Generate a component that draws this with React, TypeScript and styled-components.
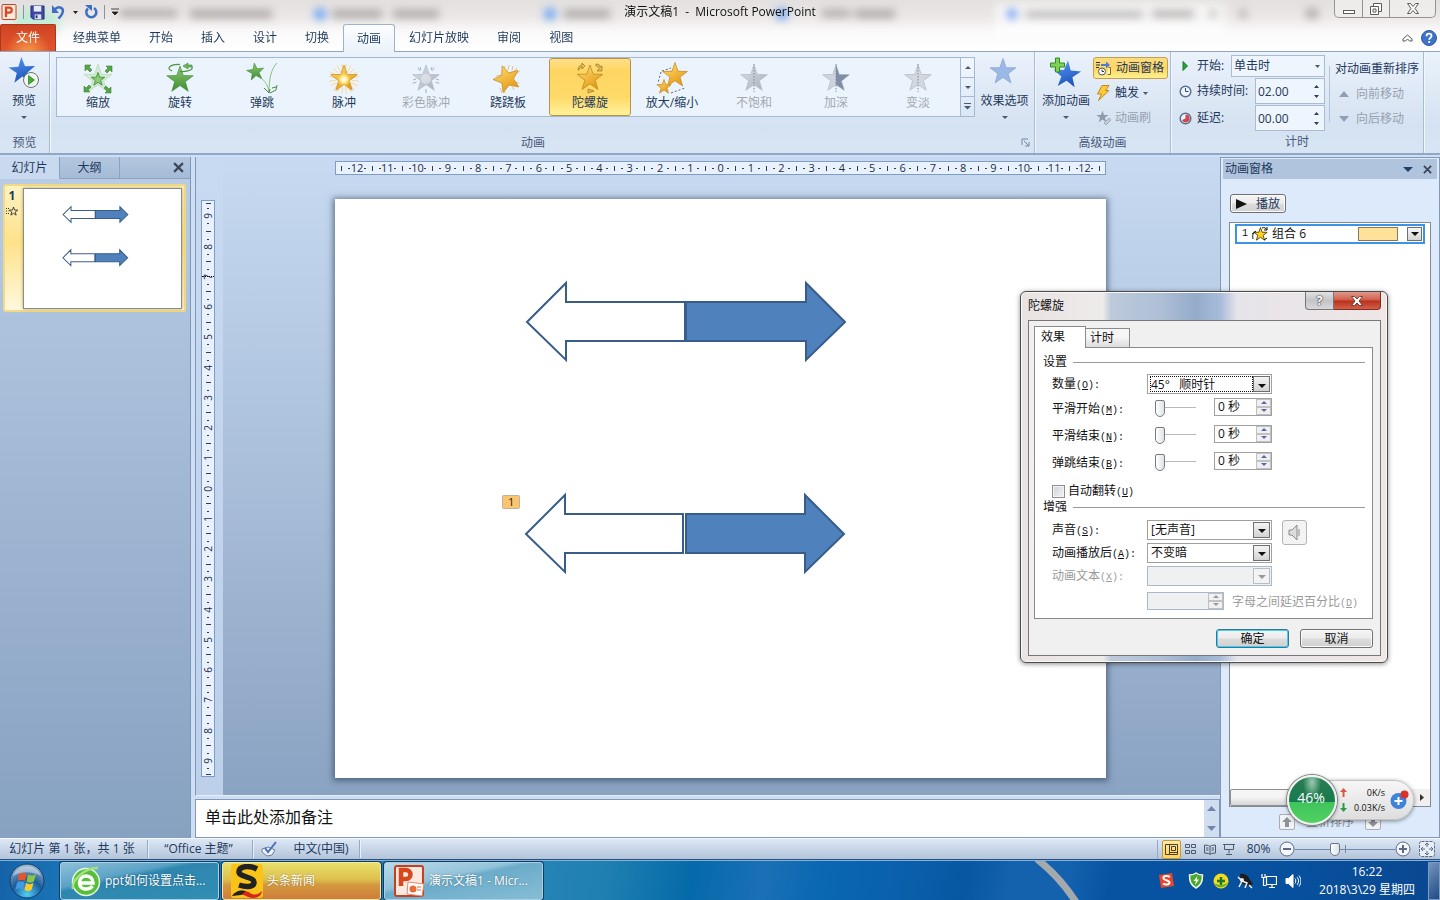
import React from 'react';
import styled, { createGlobalStyle, css } from 'styled-components';

const Global = createGlobalStyle`
  *, *::before, *::after { box-sizing: border-box; }
  body { margin: 0; font: 12px/16px "Open Sans", "Noto Sans CJK SC", sans-serif; color: #1e395b; }
  button, input, select, textarea { font: inherit; color: inherit; margin: 0; padding: 0; border: 0; background: none; outline: none; }
  button { white-space: nowrap; cursor: default; }
  svg { display: block; flex: none; }
`;

const starPoints = (cx: number, cy: number, r: number, rot = 0, inner = 0.4) =>
  Array.from({ length: 10 }, (_, i) => {
    const a = ((i * 36 - 90 + rot) * Math.PI) / 180;
    const d = i % 2 ? r * inner : r;
    return `${(cx + d * Math.cos(a)).toFixed(2)},${(cy + d * Math.sin(a)).toFixed(2)}`;
  }).join(' ');

/* ---------- page frame ---------- */

const Desktop = styled.div`
  position: relative;
  min-height: 100vh;
  display: flex;
  flex-direction: column;
  overflow: hidden;
`;

const TopChrome = styled.header`
  position: relative;
  background: linear-gradient(#e3e0df 0, #eae7e6 16px, #fbfafa 32px, #fff 51px);
  border-bottom: 1px solid #8fa5c0;
`;

const GlassBackdrop = styled.svg`
  position: absolute;
  left: 0;
  top: 0;
  width: 100%;
  height: 48px;
`;

const TitleBar = styled.div`
  position: relative;
  height: 24px;
  display: grid;
  grid-template-columns: 1fr auto 1fr;
  align-items: center;
`;

const QuickAccess = styled.div`
  display: flex;
  align-items: center;
  height: 22px;
  padding-left: 1px;
  gap: 6px;
`;

const IconButton = styled.button`
  display: flex;
  align-items: center;
  justify-content: center;
`;

const Separator = styled.span`
  width: 1px;
  height: 14px;
  background: #8d929c;
`;

const AppTitle = styled.h1`
  margin: 0;
  font: inherit;
  line-height: 24px;
  color: #111;
  white-space: pre;
`;

const WindowButtons = styled.div`
  justify-self: end;
  align-self: start;
  margin-right: 4px;
  height: 18px;
  display: flex;
  border: 1px solid #98928f;
  border-top: 0;
  border-radius: 0 0 5px 5px;
  background: rgba(240, 238, 237, 0.8);
`;

const WindowButton = styled.button<{ $wide?: boolean }>`
  width: ${(p) => (p.$wide ? 46 : 27)}px;
  display: flex;
  justify-content: center;
  align-items: center;
  & + & { border-left: 1px solid #98928f; }
`;

const TabBar = styled.nav`
  position: relative;
  height: 27px;
  display: flex;
`;

const FileTab = styled.button`
  width: 56px;
  height: 27px;
  color: #fff;
  border: 1px solid #a83a1c;
  border-bottom: 0;
  border-radius: 2px 2px 0 0;
  background: radial-gradient(ellipse at 50% 110%, #f79a4a 0, rgba(240, 110, 50, 0) 60%), linear-gradient(#cf4423, #e2542b);
  margin-right: 3px;
`;

const RibbonTab = styled.button<{ $active?: boolean }>`
  padding: 0 14px;
  height: 27px;
  ${(p) =>
    p.$active &&
    css`
      height: 28px;
      padding: 0 13px;
      border: 1px solid #9fb2cb;
      border-bottom: 0;
      border-radius: 3px 3px 0 0;
      background: linear-gradient(#fdfeff, #eaf2fb);
    `}
`;

const TabBarEnd = styled.div`
  margin-left: auto;
  display: flex;
  align-items: center;
  gap: 8px;
  padding-right: 3px;
`;

/* ---------- ribbon ---------- */

const Ribbon = styled.section`
  display: flex;
  height: 103px;
  padding-right: 16px;
  background: linear-gradient(#eaf2fb 0, #dfe9f6 40px, #d5e2f1 75px, #d8e5f4);
  border-bottom: 2px solid #8fa8c8;
`;

const Group = styled.div<{ $grow?: boolean; $width?: number }>`
  display: flex;
  flex-direction: column;
  ${(p) => (p.$grow ? 'flex: 1; min-width: 0;' : `flex: none; width: ${p.$width}px;`)}
  border-right: 1px solid #a9bcd5;
  box-shadow: 1px 0 0 #f2f7fc;
`;

const GroupBody = styled.div<{ $left?: number }>`
  flex: 1;
  display: flex;
  padding: 5px 0 0 ${(p) => p.$left ?? 5}px;
  min-width: 0;
`;

const GroupLabel = styled.div<{ $launcher?: boolean }>`
  position: relative;
  height: 21px;
  padding-right: ${(p) => (p.$launcher ? 18 : 0)}px;
  line-height: 20px;
  text-align: center;
  color: #48597a;
`;

const Launcher = styled.button`
  position: absolute;
  right: 4px;
  top: 5px;
`;

const BigButton = styled.button<{ $width: number }>`
  width: ${(p) => p.$width}px;
  flex: none;
  height: 76px;
  display: flex;
  flex-direction: column;
  align-items: center;
  & > span { line-height: 16px; margin: 4px 0 7px; }
`;

const Gallery = styled.div`
  flex: 1;
  min-width: 0;
  height: 60px;
  display: flex;
  border: 1px solid #a4b8d2;
  background: #ebf4fc;
`;

const GalleryItems = styled.div`
  flex: 1;
  min-width: 0;
  display: flex;
  overflow: hidden;
`;

const GalleryItem = styled.button<{ $selected?: boolean }>`
  flex: none;
  width: 82px;
  height: 58px;
  display: flex;
  flex-direction: column;
  align-items: center;
  padding-top: 3px;
  border: 1px solid transparent;
  &:disabled { color: #a3a8ae; }
  & > span { line-height: 18px; }
  ${(p) =>
    p.$selected &&
    css`
      border-color: #b5944a;
      border-radius: 3px;
      background: linear-gradient(#ffe08a, #ffd562 12px, #ffda68 38px, #fff29b);
    `}
`;

const GalleryScroll = styled.div`
  width: 14px;
  display: flex;
  flex-direction: column;
  border-left: 1px solid #a4b8d2;
  background: linear-gradient(#f2f7fd, #dbe7f5);
  & > button { flex: 1; display: flex; align-items: center; justify-content: center; }
  & > button + button { border-top: 1px solid #a4b8d2; }
`;

const SmallButtons = styled.div<{ $top?: number }>`
  display: flex;
  flex-direction: column;
  align-items: flex-start;
  gap: 3px;
  margin-top: ${(p) => p.$top ?? 0}px;
`;

const SmallButton = styled.button<{ $active?: boolean }>`
  height: 22px;
  display: flex;
  align-items: center;
  gap: 4px;
  padding: 0 3px 0 2px;
  white-space: nowrap;
  border: 1px solid transparent;
  &:disabled { color: #96a0ae; }
  ${(p) =>
    p.$active &&
    css`
      border-color: #c2a04c;
      border-radius: 3px;
      background: linear-gradient(#fbdd80, #fdd663 50%, #fff08e);
    `}
`;

const ReorderTitle = styled.span`
  height: 22px;
  line-height: 22px;
  padding-left: 4px;
  white-space: nowrap;
`;

const TimingFields = styled.div`
  width: 146px;
  flex: none;
  display: flex;
  flex-direction: column;
  gap: 1px;
  margin-top: -2px;
`;

const TimingRow = styled.label`
  height: 26px;
  display: flex;
  align-items: center;
  gap: 5px;
  & > span { flex: 1; white-space: nowrap; }
  &:first-child { height: 22px; }
`;

const RibbonField = styled.span<{ $width: number }>`
  && { flex: none; }
  position: relative;
  width: ${(p) => p.$width}px;
  align-self: stretch;
  border: 1px solid #a9bcd4;
  background: #eef5fc;
  display: flex;
  align-items: center;
  & > input, & > select { width: 100%; height: 100%; padding-left: 2px; appearance: none; }
  & > svg { position: absolute; right: 4px; pointer-events: none; }
`;

const Rule = styled.span`
  width: 1px;
  height: 56px;
  margin: 9px 1px 0 4px;
  background: #b2c3d9;
`;

/* ---------- work area ---------- */

const Body = styled.main`
  flex: 1;
  display: flex;
  min-height: 0;
  background: #cfdff3;
`;

const SlidePanel = styled.aside`
  width: 191px;
  flex: none;
  border-right: 1px solid #7f97b8;
  background: linear-gradient(#b9cde6, #87a1c1);
  margin-top: 2px;
`;

const PanelTabs = styled.div`
  height: 22px;
  display: flex;
  background: linear-gradient(#b3c7df, #a4bad6);
`;

const PanelTab = styled.button<{ $active?: boolean }>`
  width: 60px;
  border-right: 1px solid #8ba2c1;
  border-bottom: 1px solid ${(p) => (p.$active ? '#c9daf0' : '#8ba2c1')};
  background: ${(p) => (p.$active ? '#c9daf0' : 'none')};
`;

const PanelTabsEnd = styled.div`
  flex: 1;
  display: flex;
  align-items: center;
  justify-content: flex-end;
  padding-right: 6px;
  border-bottom: 1px solid #8ba2c1;
`;

const ThumbItem = styled.button`
  display: flex;
  width: 183px;
  height: 128px;
  margin: 5px 0 0 3px;
  padding: 2px 2px 2px 0;
  border: 2px solid #f3d983;
  border-radius: 3px;
  background: linear-gradient(#fdf3c2, #fde28a 45%, #fff8dd);
`;

const ThumbMarks = styled.span`
  width: 14px;
  margin-right: 4px;
  display: flex;
  flex-direction: column;
  align-items: center;
  gap: 2px;
  font-weight: 700;
  line-height: 16px;
`;

const ThumbSlide = styled.span`
  flex: 1;
  height: 121px;
  background: #fff;
  border: 1px solid #8b8b8b;
  box-shadow: 0 0 3px #b9a35c;
  & > svg { width: 100%; height: 100%; }
`;

const Center = styled.section`
  flex: 1;
  min-width: 0;
  display: flex;
  flex-direction: column;
  margin: 2px 0 0 4px;
`;

const Editor = styled.div`
  flex: 1;
  display: grid;
  grid-template-columns: 27px 1fr;
  border-left: 1px solid #7f97b8;
  border-bottom: 1px solid #e6eefa;
  background: linear-gradient(#c8daf1, #bdd0ea);
`;

const Workspace = styled.div`
  grid-column: 2;
  display: flex;
  flex-direction: column;
  padding: 4px 114px 17px 112px;
  background: linear-gradient(#c8daf1, #c3d6ee 44px, #8aa3c2);
`;

const RulerColumn = styled.div`
  display: flex;
  padding: 43px 0 18px 5px;
`;

const rulerFrame = css`
  display: flex;
  border: 1px solid #7f9dc4;
  background: #e9f2fc;
  color: #1b2f4d;
  font: 11px/12px "Open Sans", sans-serif;
`;

const HRuler = styled.div`
  ${rulerFrame}
  height: 14px;
  padding: 0 2px;
`;

const VRuler = styled.div`
  ${rulerFrame}
  position: relative;
  width: 14px;
  flex-direction: column;
`;

const PointerMark = styled.i`
  position: absolute;
  left: 0;
  right: 0;
  top: 13%;
  border-top: 1px dotted #111;
`;

const RulerMark = styled.span<{ $vertical?: boolean; $end?: boolean }>`
  flex: ${(p) => (p.$end ? '0 0 4px' : '1 1 0')};
  ${(p) => (p.$vertical ? 'min-height: 0;' : 'min-width: 0;')}
  display: flex;
  align-items: center;
  justify-content: center;
  white-space: nowrap;
`;

const RulerNumber = styled.span<{ $vertical?: boolean }>`
  flex: none;
  ${(p) => p.$vertical && 'font-size: 10px; transform: rotate(-90deg);'}
`;

const Tick = styled.i<{ $vertical?: boolean; $dot?: boolean }>`
  flex: none;
  width: ${(p) => (p.$dot ? 2 : p.$vertical ? 5 : 1)}px;
  height: ${(p) => (p.$dot ? 1 : p.$vertical ? 1 : 5)}px;
  background: #2a3d5a;
`;

const Slide = styled.div`
  flex: 1;
  margin: 24px 0 0;
  background: #fff;
  box-shadow: 0 1px 6px 2px rgba(50, 68, 95, 0.65);
  min-height: 0;
  & > svg { width: 100%; height: 100%; }
`;

const Notes = styled.div`
  height: 39px;
  flex: none;
  margin-top: 3px;
  display: flex;
  border: 1px solid #8399b9;
  background: #fff;
  & > textarea {
    flex: 1;
    resize: none;
    overflow: hidden;
    padding: 5px 0 0 9px;
    font: 16px/22px "Noto Sans CJK SC", sans-serif;
    color: #111;
  }
`;

const NotesScroll = styled.div`
  width: 15px;
  display: flex;
  flex-direction: column;
  justify-content: space-between;
  align-items: center;
  padding: 6px 0;
  background: #d0def0;
`;

const AnimPane = styled.aside`
  width: 220px;
  flex: none;
  margin-top: 2px;
  display: flex;
  flex-direction: column;
  border: 1px solid #8299ba;
  background: #dceafb;
`;

const PaneHeader = styled.div`
  height: 20px;
  margin: 1px 2px 0;
  padding: 0 5px 0 2px;
  display: flex;
  align-items: center;
  gap: 10px;
  background: #b0c4de;
  & > span { flex: 1; }
`;

const classicButton = css`
  border: 1px solid #707070;
  border-radius: 3px;
  background: linear-gradient(#f4f4f4, #ececec 48%, #dcdcdc 52%, #d0d0d0);
  box-shadow: inset 0 0 0 1px #fbfbfb;
`;

const PlayButton = styled.button`
  ${classicButton}
  width: 56px;
  height: 19px;
  margin: 15px 0 0 9px;
  display: flex;
  align-items: center;
  gap: 9px;
  padding-left: 5px;
`;

const AnimList = styled.div`
  flex: 1;
  margin: 9px 8px 0 8px;
  display: flex;
  flex-direction: column;
  justify-content: space-between;
  border: 1px solid #828a98;
  background: #fff;
`;

const AnimEntry = styled.div`
  height: 20px;
  margin: 1px 5px 0;
  display: flex;
  align-items: center;
  gap: 4px;
  padding: 0 1px 0 5px;
  border: 2px solid #3d94e4;
  color: #111;
  & > span:nth-of-type(2) { flex: 1; }
`;

const AnimBar = styled.i`
  width: 40px;
  height: 14px;
  margin-right: 5px;
  border: 1px solid #857a5c;
  background: #ffe29a;
`;

const ArrowBox = styled.button`
  width: 15px;
  height: 14px;
  display: flex;
  align-items: center;
  justify-content: center;
  border: 1px solid #707070;
  background: linear-gradient(#f6f6f6, #d4d4d4);
`;

const HScroll = styled.div`
  height: 17px;
  display: flex;
  justify-content: space-between;
  background: #f0f0f0;
  & > span {
    width: 50%;
    border: 1px solid #8f8f8f;
    border-radius: 2px;
    background: linear-gradient(#f5f5f5 45%, #d6d6d6);
  }
  & > button { width: 17px; display: flex; align-items: center; justify-content: center; }
`;

const Reorder = styled.div`
  height: 30px;
  display: flex;
  align-items: center;
  justify-content: center;
  gap: 11px;
  color: #848a93;
`;

const ReorderButton = styled.button`
  width: 16px;
  height: 16px;
  display: flex;
  align-items: center;
  justify-content: center;
  border: 1px solid #a9adb3;
  border-radius: 2px;
  background: #f2f3f5;
`;

/* ---------- status bar ---------- */

const StatusBar = styled.footer`
  height: 22px;
  flex: none;
  display: flex;
  align-items: center;
  border-top: 1px solid #f4f8fd;
  border-bottom: 1px solid #2e4f78;
  background: linear-gradient(#dde8f6, #c8d6e8 50%, #b3c4da);
`;

const StatusItem = styled.button<{ $width: number }>`
  width: ${(p) => p.$width}px;
  height: 18px;
  padding-right: 3px;
  display: flex;
  align-items: center;
  justify-content: center;
  gap: 15px;
  border-right: 1px solid #96a9c3;
  box-shadow: 1px 0 0 #e8f0fa;
`;

const ViewButtons = styled.div`
  margin-left: auto;
  display: flex;
  align-items: center;
  padding-left: 4px;
  border-left: 1px solid #96a9c3;
`;

const ViewButton = styled.button<{ $active?: boolean }>`
  width: 19px;
  height: 19px;
  display: flex;
  align-items: center;
  justify-content: center;
  ${(p) =>
    p.$active &&
    css`
      border: 1px solid #c29a3a;
      border-radius: 2px;
      background: linear-gradient(#ffe9a8, #ffd45c);
    `}
`;

const ZoomArea = styled.div`
  display: flex;
  align-items: center;
  padding: 0 5px 0 7px;
  & > button:last-child { margin-left: 8px; }
`;

const ZoomValue = styled.button`
  width: 27px;
  margin-right: 7px;
`;

const range = css`
  appearance: none;
  height: 16px;
  &::-webkit-slider-thumb {
    appearance: none;
    width: 10px;
    border: 1px solid #6f7885;
    border-radius: 2px 2px 5px 5px;
    background: linear-gradient(90deg, #fff, #dfe3e8);
  }
`;

const ZoomRange = styled.input`
  ${range}
  width: 100px;
  background: linear-gradient(#6f88ab, #6f88ab) center / 100% 1px no-repeat,
    linear-gradient(#6f88ab, #6f88ab) center / 1px 8px no-repeat;
  &::-webkit-slider-thumb { height: 13px; }
`;

/* ---------- task bar ---------- */

const Taskbar = styled.div`
  position: relative;
  height: 40px;
  flex: none;
  display: flex;
  align-items: center;
  border-top: 1px solid #7fb2dc;
  background: linear-gradient(100deg, #1562a8 0, #1a76b8 5%, #2683b5 38%, #1f80b0 42%, #056aa9 48%, #1b70b5 53%, #0a67b2 57%, #0a5fab 63%, #0757a2 67%, #1461ad 70%, #1461ad 74%, #0753a2 77%, #07509d 90%, #0b4790 100%);
`;

const Streak = styled.svg`
  position: absolute;
  right: 347px;
  top: 0;
`;

const StartButton = styled.button`
  width: 60px;
  height: 38px;
  padding-left: 9px;
`;

const TaskButton = styled.button<{ $tone: 'blue' | 'gold' | 'light' }>`
  width: 159px;
  height: 38px;
  margin-right: 3px;
  display: flex;
  align-items: center;
  gap: 4px;
  padding-left: ${(p) => (p.$tone === 'blue' ? 10 : 8)}px;
  color: #fff;
  border: 1px solid ${(p) => (p.$tone === 'gold' ? '#f6e8a5' : '#a9d0e6')};
  border-radius: 3px;
  box-shadow: 0 0 0 1px #123b5e;
  background: ${(p) =>
    ({
      blue: 'linear-gradient(168deg, #8fc0d8 0, #5aa2c6 35%, #2f86b0 42%, #2f8fb2 100%)',
      gold: 'linear-gradient(#e8e06a 0, #dfc04e 45%, #d39a40 60%, #cf7c38 100%)',
      light: 'linear-gradient(168deg, #b9dbe8 0, #93c3da 38%, #6bacca 45%, #86bdd4 100%)',
    })[p.$tone]};
  text-shadow: 0 0 2px rgba(0, 0, 0, 0.4);
`;

const Tray = styled.div`
  position: relative;
  margin-left: auto;
  display: flex;
  align-items: center;
  gap: 8px;
`;

const Clock = styled.time`
  width: 100px;
  margin: 0 17px 0 8px;
  line-height: 18px;
  text-align: center;
  color: #fff;
  white-space: nowrap;
`;

const ShowDesktop = styled.button`
  width: 12px;
  height: 38px;
  margin-left: -14px;
  border: 1px solid #7d9cc4;
  background: linear-gradient(135deg, #7695bd, #1d4a86);
`;

/* ---------- dialog ---------- */

const Dialog = styled.section`
  position: absolute;
  right: 52px;
  top: 291px;
  width: 368px;
  padding: 0 6px 6px 7px;
  color: #111;
  border: 1px solid #4b4b4b;
  border-radius: 6px;
  background: linear-gradient(90deg, #e9e3e1 0, #eeebeb 82px, #bccadb 90px, #aebfd6 140px, #94abca 175px, #a9bddb 200px, #e6e4ea 216px, #efe6e5 100%);
  box-shadow: inset 0 0 0 1px #faf8f7, 0 1px 5px rgba(0, 0, 0, 0.45);
`;

const DialogTitle = styled.div`
  height: 28px;
  display: flex;
  & > h2 { margin: 0; flex: 1; font: inherit; line-height: 28px; }
`;

const DialogHelp = styled.button`
  width: 29px;
  height: 18px;
  display: flex;
  align-items: center;
  justify-content: center;
  border: 1px solid #777;
  border-top: 0;
  border-radius: 0 0 0 4px;
  background: linear-gradient(#e2e2e4, #c3c3c8 50%, #d9d9dd);
  color: #fff;
  font-weight: 700;
  text-shadow: 0 0 2px #222, 0 0 1px #222;
`;

const DialogClose = styled(DialogHelp)`
  width: 47px;
  border-color: #7e2f24;
  border-left: 0;
  border-radius: 0 0 4px 0;
  background: linear-gradient(#e0998c, #cf5c4a 48%, #b8301a 52%, #d4604a);
`;

const DialogClient = styled.form`
  padding: 5px 7px 7px 5px;
  border: 1px solid #777;
  background: #f0f0f0;
`;

const DialogTabs = styled.div`
  height: 21px;
  display: flex;
  align-items: flex-end;
`;

const DialogTab = styled.button<{ $active?: boolean }>`
  position: relative;
  border: 1px solid #8a8a8a;
  text-align: left;
  ${(p) =>
    p.$active
      ? 'width: 52px; height: 22px; margin-bottom: -1px; padding: 0 0 2px 6px; border-bottom: 0; background: #fff;'
      : 'width: 44px; height: 19px; border-left: 0; border-bottom: 0; padding-left: 4px; background: linear-gradient(#f6f6f6 45%, #dcdcdc);'}
`;

const DialogPage = styled.div`
  padding: 7px 7px 0 8px;
  border: 1px solid #8a8a8a;
  background: #fff;
`;

const Heading = styled.h3`
  height: 14px;
  margin: 0 0 4px;
  display: flex;
  align-items: center;
  gap: 6px;
  font: inherit;
  line-height: 14px;
  &::after { content: ''; flex: 1; height: 1px; background: #9a9a9a; }
`;

const Field = styled.div<{ $height: number; $disabled?: boolean }>`
  height: ${(p) => p.$height}px;
  display: flex;
  align-items: center;
  padding-left: 9px;
  color: ${(p) => (p.$disabled ? '#9a9a9a' : '#111')};
  & > label:first-child, & > span:first-child { width: 95px; flex: none; padding-top: 2px; white-space: nowrap; }
`;

const DelayLabel = styled.label`
  margin-left: 8px;
  white-space: nowrap;
`;

const CheckRow = styled.label`
  height: 18px;
  margin: 6px 0 0 9px;
  display: flex;
  align-items: center;
  gap: 3px;
  & > span { padding-top: 2px; }
  & > input {
    appearance: none;
    width: 13px;
    height: 13px;
    border: 1px solid #8e8f8f;
    box-shadow: inset 0 0 0 1px #f4f4f4;
    background: linear-gradient(135deg, #cfd2d8, #f3f3f3);
  }
`;

const Mono = styled.span`
  font: 10px/16px "Liberation Mono", monospace;
`;

const Combo = styled.span<{ $disabled?: boolean }>`
  position: relative;
  width: 125px;
  height: 20px;
  display: flex;
  align-items: center;
  border: 1px solid ${(p) => (p.$disabled ? '#a9b9ca' : '#a0a0a0')};
  background: ${(p) => (p.$disabled ? '#eef0f2' : '#fff')};
  & > select { width: 100%; height: 18px; padding-left: 3px; appearance: none; opacity: 1; }
  & > select[data-current='true'] {
    width: 103px;
    height: 16px;
    margin-left: 2px;
    padding-left: 0;
    border: 1px dotted #111;
  }
`;

const ComboArrow = styled.i<{ $disabled?: boolean }>`
  position: absolute;
  right: 1px;
  top: 1px;
  width: 17px;
  height: 16px;
  display: flex;
  align-items: center;
  justify-content: center;
  padding-top: 3px;
  pointer-events: none;
  border: 1px solid ${(p) => (p.$disabled ? '#b5bec8' : '#6f6f6f')};
  background: ${(p) => (p.$disabled ? '#f3f3f3' : 'linear-gradient(#f4f4f4, #d3d3d3)')};
`;

const SmoothRange = styled.input`
  ${range}
  width: 41px;
  margin: 0 18px 0 8px;
  background: linear-gradient(#b8b8b8, #b8b8b8) center 6px / 100% 1px no-repeat;
  &::-webkit-slider-thumb { height: 17px; border-color: #7a7a7a; }
`;

const Spinner = styled.span<{ $width: number; $disabled?: boolean }>`
  width: ${(p) => p.$width}px;
  height: 18px;
  margin-top: -4px;
  display: flex;
  align-items: center;
  border: 1px solid ${(p) => (p.$disabled ? '#a9b9ca' : '#a0a0a0')};
  background: ${(p) => (p.$disabled ? '#eef0f2' : '#fff')};
  & > input { flex: 1; min-width: 0; height: 16px; padding-left: 3px; }
`;

const SpinKeys = styled.span`
  width: 15px;
  height: 16px;
  display: flex;
  flex-direction: column;
  & > button { flex: 1; display: flex; align-items: center; justify-content: center; border: 1px solid #c1c1c1; background: #f0f0f0; }
`;

const SoundButton = styled.button`
  width: 25px;
  height: 25px;
  align-self: flex-start;
  margin: 2px 0 0 10px;
  display: flex;
  align-items: center;
  justify-content: center;
  border: 1px solid #b4b4b4;
  border-radius: 3px;
  background: #f3f3f3;
`;

const DialogActions = styled.div`
  display: flex;
  justify-content: flex-end;
  gap: 11px;
  padding-top: 10px;
`;

const DialogButton = styled.button<{ $primary?: boolean }>`
  ${classicButton}
  width: 73px;
  height: 19px;
  line-height: 16px;
  ${(p) => p.$primary && 'border-color: #2f7896; box-shadow: inset 0 0 0 1px #45cdf5;'}
`;

/* ---------- network gadget ---------- */

const Gadget = styled.div`
  position: absolute;
  right: 26px;
  bottom: 75px;
  display: flex;
  align-items: center;
`;

const GadgetBall = styled.div`
  position: relative;
  width: 50px;
  height: 50px;
  margin-right: -25px;
  padding: 0 2px 4px 0;
  display: flex;
  align-items: center;
  justify-content: center;
  border: 2px solid #f2f4f3;
  border-radius: 50%;
  font-size: 14px;
  color: #fff;
  background: radial-gradient(ellipse at 50% 12%, #9bc9b2 0, rgba(80, 150, 110, 0) 28%), linear-gradient(#2b7d55 0, #177a4c 54%, #3fc45c 55%, #50d060);
  box-shadow: 0 0 0 1px #7d8682, 0 1px 4px rgba(0, 0, 0, 0.5);
`;

const GadgetPill = styled.div`
  width: 102px;
  height: 40px;
  padding: 0 4px 0 27px;
  display: flex;
  align-items: center;
  justify-content: space-between;
  border-radius: 20px;
  border: 1px solid #c4c4c4;
  background: linear-gradient(#f6f6f6, #dedede);
  box-shadow: 0 1px 4px rgba(0, 0, 0, 0.45);
`;

const Rates = styled.div`
  flex: 1;
  font: 9px/15px "Open Sans", sans-serif;
  color: #111;
  & > div { display: flex; justify-content: space-between; align-items: center; padding-right: 5px; }
`;

/* ---------- drawings ---------- */

type Dir = 'up' | 'down' | 'right';
const Tri = ({ dir = 'down', w = 6, color = '#4a5a72' }: { dir?: Dir; w?: number; color?: string }) => {
  const h = Math.ceil(w / 2);
  if (dir === 'right')
    return (
      <svg width={h} height={w}>
        <polygon points={`0,0 ${h},${w / 2} 0,${w}`} fill={color} />
      </svg>
    );
  return (
    <svg width={w} height={h}>
      <polygon points={dir === 'down' ? `0,0 ${w},0 ${w / 2},${h}` : `0,${h} ${w},${h} ${w / 2},0`} fill={color} />
    </svg>
  );
};

const Close = ({ size = 10, color = '#3d4757' }: { size?: number; color?: string }) => (
  <svg width={size} height={size} viewBox="0 0 10 10">
    <path d="M1 1 9 9M9 1 1 9" stroke={color} strokeWidth="2" />
  </svg>
);

const GradientSheet = styled.svg`
  position: absolute;
`;

const Defs = () => (
  <GradientSheet width="0" height="0" aria-hidden>
    <defs>
      <linearGradient id="gold" x1="0" y1="0" x2="0.6" y2="1">
        <stop offset="0" stopColor="#ffe27a" />
        <stop offset="1" stopColor="#e69a14" />
      </linearGradient>
      <linearGradient id="green" x1="0" y1="0" x2="0" y2="1">
        <stop offset="0" stopColor="#8ccb74" />
        <stop offset="1" stopColor="#3c8a32" />
      </linearGradient>
      <linearGradient id="blue" x1="0" y1="0" x2="0.4" y2="1">
        <stop offset="0" stopColor="#5c9cf0" />
        <stop offset="1" stopColor="#1e55be" />
      </linearGradient>
      <linearGradient id="gray" x1="0" y1="0" x2="1" y2="1">
        <stop offset="0" stopColor="#dfe3ea" />
        <stop offset="1" stopColor="#a3adbb" />
      </linearGradient>
      <radialGradient id="glow">
        <stop offset="0" stopColor="#fff" />
        <stop offset="0.4" stopColor="#fff3a8" />
        <stop offset="1" stopColor="#ffd850" stopOpacity="0" />
      </radialGradient>
      <radialGradient id="orb" cx="0.5" cy="0.9" r="0.9">
        <stop offset="0" stopColor="#4fd0f5" />
        <stop offset="0.5" stopColor="#1b5c9c" />
        <stop offset="1" stopColor="#9db9d2" />
      </radialGradient>
    </defs>
  </GradientSheet>
);

const Icon32 = ({ children }: { children: React.ReactNode }) => (
  <svg width="32" height="32" viewBox="0 0 32 32" fill="none">
    {children}
  </svg>
);

const rays = (n: number, r1: number, r2: number, color: string) =>
  Array.from({ length: n }, (_, i) => {
    const a = ((i * 360) / n - 90 + 180 / n) * (Math.PI / 180);
    return (
      <line
        key={i}
        x1={16 + r1 * Math.cos(a)}
        y1={17 + r1 * Math.sin(a)}
        x2={16 + r2 * Math.cos(a)}
        y2={17 + r2 * Math.sin(a)}
        stroke={color}
      />
    );
  });

const ZoomStar = () => (
  <Icon32>
    <polygon points={starPoints(16, 17, 15)} fill="#d2e8d3" stroke="#b4d5b4" strokeWidth="0.6" />
    <polygon points={starPoints(16, 17.500, 7)} fill="#8fca7c" stroke="#4a9a3e" />
    {[0, 90, 180, 270].map((a) => (
      <g key={a} transform={`rotate(${a} 16 17)`}>
        <path d="M30 4h-6l2 2-3 3 2 2 3-3 2 2z" fill="#58a548" stroke="#3b8433" strokeWidth="0.6" />
      </g>
    ))}
  </Icon32>
);

const SpinStar = () => (
  <Icon32>
    <polygon points={starPoints(16, 18, 14)} fill="url(#green)" stroke="#3f8a36" strokeWidth="0.6" />
    <path d="M8 9C1 6 7 2 16 2.500M27 4c4 3-2 6-11 5.500" stroke="#4b9440" strokeWidth="1.200" />
    <path d="M24 1l-5 3 5 3V5h4V3h-4z" fill="#6bb55b" stroke="#3f8a36" strokeWidth="0.6" />
  </Icon32>
);

const BounceStar = () => (
  <Icon32>
    <polygon points={starPoints(9.500, 10, 9, -8)} fill="url(#green)" stroke="#3f8a36" strokeWidth="0.6" />
    <path d="M14 16c5 2 8 7 9 15 0-14 2-24 8-30" stroke="#8dbd82" />
    <path d="M18 26l5 5 1-4M31 23l-1 5-6 3M30 25l-4 1" stroke="#4b8a45" />
  </Icon32>
);

const PulseStar = () => (
  <Icon32>
    {rays(20, 8, 15, '#f7d99a')}
    <polygon points={starPoints(16, 17, 14)} fill="url(#gold)" stroke="#cf8f25" strokeWidth="0.8" />
    <circle cx="16" cy="17.500" r="7" fill="url(#glow)" />
  </Icon32>
);

const ColorPulseStar = () => (
  <Icon32>
    {rays(5, 10, 14, '#9fb0c6')}
    <polygon points={starPoints(16, 17, 14)} fill="url(#gray)" stroke="#b7bec9" strokeWidth="0.8" />
    <path d="M10 5l1 3M22 5l-1 3M3 18l3-1M29 18l-3-1" stroke="#9fb0c6" />
    <circle cx="16" cy="17" r="5" fill="#fff" opacity="0.4" />
  </Icon32>
);

const TeeterStar = () => (
  <Icon32>
    <path
      d="M13 4l-1 5M17 3l-1 5M21 4l-1 4M25 6l-3 4M28 9l-4 3M4 14l6-1M27 21l-4-1M8 26l2 5M12 26l1 5M26 25l-4-3M22 28l-2-4"
      stroke="#e6bf8c"
    />
    <polygon points={starPoints(15, 17, 14, -20, 0.46)} fill="url(#gold)" stroke="#c98b22" strokeWidth="0.8" />
  </Icon32>
);

const SpinTopStar = () => (
  <Icon32>
    <polygon points={starPoints(16, 16.500, 13.500)} fill="url(#gold)" stroke="#b98a28" strokeWidth="0.8" />
    <path
      d="M4 8c0-3 2-5 4-5V1l3 3-3 3V5C6 5 6 6 5 8zM22 2c3 0 4 1 4 3l2-1v5h-5l2-2c0-1-1-3-3-3zM14 27l6 2-3 1-3 1z"
      fill="#e2bb58"
      stroke="#9a7725"
      strokeWidth="0.7"
    />
  </Icon32>
);

const GrowStar = () => (
  <Icon32>
    <path d="M5 10L2 21M15 31l14-5M6 9l9-3" stroke="#666" strokeDasharray="2 2" />
    <polygon points={starPoints(19, 13.500, 13)} fill="url(#gold)" stroke="#c98b22" strokeWidth="0.8" />
    <polygon points={starPoints(8, 25, 7.500)} fill="url(#gold)" stroke="#c98b22" strokeWidth="0.8" />
  </Icon32>
);

const GrayStar = ({ half, pale }: { half?: boolean; pale?: boolean }) => (
  <Icon32>
    <polygon points={starPoints(16, 17, 14)} fill={pale ? '#d3d8de' : half ? '#ccd3dc' : 'url(#gray)'} stroke="#b6bdc8" strokeWidth="0.8" />
    {half && <path d="M16 3l3.300 9.700H29.300l-8 6.600 3 9L16 22.600z" fill="#7f8fa8" />}
    <path d="M16 2v28" stroke="#7e8794" strokeDasharray="1.500 1.500" />
  </Icon32>
);

const BlueStar = ({ kind }: { kind: 'play' | 'plus' | 'pale' }) => (
  <Icon32>
    {kind === 'play' && (
      <>
        <polygon points={starPoints(14, 14, 14, -3)} fill="url(#blue)" />
        <circle cx="23" cy="23" r="7.500" fill="#f4f6f4" stroke="#6b7570" />
        <path d="M20.500 18.500v9l6-4.500z" fill="#3fae35" stroke="#237c20" strokeWidth="0.7" />
      </>
    )}
    {kind === 'plus' && (
      <>
        <polygon points={starPoints(17, 18, 14.500, 4)} fill="url(#blue)" />
        <path d="M5.500 1h4v5h5v4h-5v5h-4v-5h-5V6h5z" fill="#7ed254" stroke="#2f8a22" />
      </>
    )}
    {kind === 'pale' && <polygon points={starPoints(14, 15, 13.500)} fill="#9bb9e6" stroke="#7f9fd2" strokeWidth="0.7" />}
  </Icon32>
);

const galleryItems: { name: string; icon: React.ReactNode; disabled?: boolean; selected?: boolean }[] = [
  { name: '缩放', icon: <ZoomStar /> },
  { name: '旋转', icon: <SpinStar /> },
  { name: '弹跳', icon: <BounceStar /> },
  { name: '脉冲', icon: <PulseStar /> },
  { name: '彩色脉冲', icon: <ColorPulseStar />, disabled: true },
  { name: '跷跷板', icon: <TeeterStar /> },
  { name: '陀螺旋', icon: <SpinTopStar />, selected: true },
  { name: '放大/缩小', icon: <GrowStar /> },
  { name: '不饱和', icon: <GrayStar />, disabled: true },
  { name: '加深', icon: <GrayStar half />, disabled: true },
  { name: '变淡', icon: <GrayStar pale />, disabled: true },
];

const ClockIcon = ({ red }: { red?: boolean }) => (
  <svg width="13" height="13" viewBox="0 0 13 13" fill="none">
    <circle cx="6.500" cy="6.500" r="5.300" fill="#eef4fb" stroke="#5b6f90" strokeWidth="1.500" />
    {red ? (
      <path d="M6.500 2.500a4 4 0 11-3.500 5.500l3.500-1.500z" fill="#cf4650" />
    ) : (
      <path d="M6.500 3v3.500H9.500" stroke="#2c4a7c" />
    )}
  </svg>
);

const SlideDrawing = ({ stroke, badge }: { stroke: number; badge?: boolean }) => (
  <svg viewBox="0 0 771 579" fill="none">
    <g stroke="#385d8a" strokeWidth={stroke}>
      <path d="M192 123l39-39v19h119v39H231v19z" fill="#fff" />
      <path d="M510 123l-39-39v19H351v39h120v19z" fill="#4f81bd" />
      <path d="M191 335l39-39v19h118v39H230v19z" fill="#fff" />
      <path d="M509 335l-39-39v19H351v39h119v19z" fill="#4f81bd" />
    </g>
    {badge && (
      <>
        <rect x="167.500" y="296.500" width="17" height="13" rx="1" fill="#fbc56d" stroke="#b9b2a5" />
        <text x="173" y="307" fontSize="11" fill="#222" fontFamily="Open Sans, sans-serif">
          1
        </text>
      </>
    )}
  </svg>
);

const rulerMarks = (max: number, vertical?: boolean) => {
  const out: React.ReactNode[] = [];
  for (let n = -max; n <= max; n++) {
    out.push(
      <RulerMark key={`${n}t`} $vertical={vertical} $end={vertical && n === -max}><Tick $vertical={vertical} /></RulerMark>,
      <RulerMark key={`${n}a`} $vertical={vertical}><Tick $dot /></RulerMark>,
      <RulerMark key={`${n}n`} $vertical={vertical}><RulerNumber $vertical={vertical}>{Math.abs(n)}</RulerNumber></RulerMark>,
      <RulerMark key={`${n}b`} $vertical={vertical}><Tick $dot /></RulerMark>,
    );
  }
  out.push(<RulerMark key="end" $vertical={vertical} $end={vertical}><Tick $vertical={vertical} /></RulerMark>);
  return out;
};

const PowerPointLogo = ({ size }: { size: number }) => (
  <svg width={size} height={size} viewBox="0 0 32 32" fill="none">
    <rect x="2" y="1" width="28" height="30" rx="2" fill="#fbe9e0" stroke="#c8401e" strokeWidth="2" />
    <path d={size > 20 ? 'M8 21V5h5a4.500 4.500 0 010 9H8' : 'M10 26V7h6.500a5 5 0 010 10H10'} stroke="#d8481f" strokeWidth="4.500" />
    {size > 20 && (
      <>
        <path d="M15 17l16 2-2 12-15-2z" fill="#fff" stroke="#e08a6a" />
        <circle cx="20" cy="24" r="3.500" fill="#ea6a3a" />
        <path d="M24 22h4M24 25h4" stroke="#ea6a3a" />
      </>
    )}
  </svg>
);

/* ---------- sections ---------- */

const Backdrop = () => (
  <GlassBackdrop viewBox="0 0 1440 48" preserveAspectRatio="none" aria-hidden>
    <defs>
      <filter id="haze" x="-20%" y="-60%" width="140%" height="220%">
        <feGaussianBlur stdDeviation="4" />
      </filter>
    </defs>
    <g filter="url(#haze)">
      <ellipse cx="36" cy="24" rx="24" ry="16" fill="#a5ecc9" opacity="0.6" />
      <rect x="995" y="3" width="230" height="34" fill="#fff" opacity="0.6" />
      {[320, 550, 782, 1012].map((x) => (
        <circle key={x} cx={x} cy="14" r="6" fill="#69a4f4" />
      ))}
      <g fill="#6f6b6a" opacity="0.5">
        <rect x="120" y="10" width="57" height="7" />
        <rect x="190" y="10" width="82" height="8" />
        <rect x="332" y="10" width="50" height="8" />
        <rect x="393" y="10" width="46" height="8" />
        <rect x="564" y="10" width="46" height="8" />
        <rect x="822" y="10" width="28" height="7" />
        <rect x="855" y="10" width="40" height="8" />
        <rect x="1025" y="11" width="118" height="7" />
        <rect x="1152" y="10" width="42" height="8" />
        <circle cx="1213" cy="14" r="4" />
        <circle cx="1243" cy="14" r="4" />
        <rect x="1306" y="9" width="12" height="9" />
      </g>
    </g>
  </GlassBackdrop>
);

const Header = () => (
  <TopChrome>
    <Backdrop />
    <TitleBar>
      <QuickAccess>
        <PowerPointLogo size={16} />
        <Separator />
        <IconButton aria-label="保存">
          <svg width="15" height="15" viewBox="0 0 16 16">
            <path d="M1 1h14v14H3l-2-2z" fill="#3d48a6" stroke="#262f7c" />
            <rect x="4" y="1" width="8" height="6" fill="#e7ecf8" />
            <rect x="5" y="10" width="7" height="5" fill="#dfe3ef" />
            <rect x="6" y="11" width="2" height="3" fill="#262f7c" />
          </svg>
        </IconButton>
        <IconButton aria-label="撤消">
          <svg width="16" height="16" viewBox="0 0 16 16" fill="none">
            <path d="M3.500 5.500C8 1 14 4 11 10c-1 2-2 3-3.500 4.500" stroke="#3c6fc4" strokeWidth="2.500" />
            <path d="M1 1v8h7z" fill="#3c6fc4" />
          </svg>
        </IconButton>
        <Tri w={5} color="#222" />
        <IconButton aria-label="恢复">
          <svg width="14" height="16" viewBox="0 0 14 16" fill="none">
            <path d="M10 4a5 5 0 11-6 .5" stroke="#3c6fc4" strokeWidth="2.500" />
            <path d="M1 1h7v6z" fill="#3c6fc4" />
          </svg>
        </IconButton>
        <Separator />
        <svg width="8" height="8">
          <path d="M0 1h8M1 4h6L4 7z" stroke="#222" fill="#222" strokeWidth="0.8" />
        </svg>
      </QuickAccess>
      <AppTitle>演示文稿1  -  Microsoft PowerPoint</AppTitle>
      <WindowButtons>
        <WindowButton aria-label="最小化">
          <svg width="12" height="12"><rect x="0.500" y="7.500" width="11" height="3" fill="#fff" stroke="#5a5a5a" /></svg>
        </WindowButton>
        <WindowButton aria-label="还原">
          <svg width="12" height="12" fill="#fff" stroke="#5a5a5a">
            <path d="M3.500.5h8v8h-8z" />
            <path d="M.5 3.500h8v8h-8zM3 6h3v3H3z" />
          </svg>
        </WindowButton>
        <WindowButton $wide aria-label="关闭">
          <svg width="12" height="11" viewBox="0 0 12 11">
            <path d="M.5.5h3L6 3.500 8.500.5h3L8 5.500l3.500 5h-3L6 7.500l-2.500 3h-3l3.500-5z" fill="#fff" stroke="#5a5a5a" />
          </svg>
        </WindowButton>
      </WindowButtons>
    </TitleBar>
    <TabBar>
      <FileTab>文件</FileTab>
      {['经典菜单', '开始', '插入', '设计', '切换', '动画', '幻灯片放映', '审阅', '视图'].map((t) => (
        <RibbonTab key={t} $active={t === '动画'}>{t}</RibbonTab>
      ))}
      <TabBarEnd>
        <IconButton aria-label="功能区最小化">
          <svg width="11" height="8" fill="#fff" stroke="#555"><path d="M1 5l4.500-4L10 5v2H7.500l-2-2-2 2H1z" /></svg>
        </IconButton>
        <IconButton aria-label="帮助">
          <svg width="16" height="16" viewBox="0 0 16 16" fill="none">
            <circle cx="8" cy="8" r="7.500" fill="#3f72c8" stroke="#2c5aa8" />
            <path d="M5.500 6.200C5.500 2.800 10.500 3 10.500 6c0 1.800-2.300 1.800-2.300 3.700M8.200 11v2" stroke="#fff" strokeWidth="1.800" />
          </svg>
        </IconButton>
      </TabBarEnd>
    </TabBar>
  </TopChrome>
);

const SpinArrows = () => (
  <svg width="7" height="15" viewBox="0 0 7 15" fill="#2c3f5e">
    <path d="M1 4l2.500-3L6 4zM1 11l2.500 3L6 11z" />
  </svg>
);

const RibbonBar = () => (
  <Ribbon>
    <Group $width={50}>
      <GroupBody $left={4}>
        <BigButton $width={40}>
          <BlueStar kind="play" />
          <span>预览</span>
          <Tri />
        </BigButton>
      </GroupBody>
      <GroupLabel>预览</GroupLabel>
    </Group>
    <Group $grow>
      <GroupBody $left={6}>
        <Gallery>
          <GalleryItems>
            {galleryItems.map((g) => (
              <GalleryItem key={g.name} $selected={g.selected} disabled={g.disabled}>
                {g.icon}
                <span>{g.name}</span>
              </GalleryItem>
            ))}
          </GalleryItems>
          <GalleryScroll>
            <button aria-label="上一行"><Tri dir="up" /></button>
            <button aria-label="下一行"><Tri /></button>
            <button aria-label="其他">
              <svg width="7" height="7" fill="#4a5a72"><path d="M0 0h7v1H0zM0 3h7L3.500 6.500z" /></svg>
            </button>
          </GalleryScroll>
        </Gallery>
        <BigButton $width={59}>
          <BlueStar kind="pale" />
          <span>效果选项</span>
          <Tri />
        </BigButton>
      </GroupBody>
      <GroupLabel $launcher>
        动画
        <Launcher aria-label="显示其他效果选项">
          <svg width="9" height="9" fill="none" stroke="#7486a2"><path d="M1 7V1h6M3 3l5 5M8 4v4H4" /></svg>
        </Launcher>
      </GroupLabel>
    </Group>
    <Group $width={136}>
      <GroupBody $left={4}>
        <BigButton $width={54}>
          <BlueStar kind="plus" />
          <span>添加动画</span>
          <Tri />
        </BigButton>
        <SmallButtons>
          <SmallButton $active>
            <svg width="16" height="16" viewBox="0 0 16 16" fill="none">
              <path d="M0 2.500h4M0 5h4M0 7.500h3" stroke="#333" />
              <path d="M5 4h5V1.500L14 5l-4 3.500V6H5z" fill="#4a7fd4" />
              <circle cx="6" cy="11.500" r="3.500" fill="#fff" stroke="#555" />
              <path d="M6 9.500v2h2" stroke="#333" />
              <path d="M12.500 7.500h2v7h-3" stroke="#8a6a20" fill="#fff3c5" />
            </svg>
            动画窗格
          </SmallButton>
          <SmallButton>
            <svg width="15" height="16" viewBox="0 0 15 16"><path d="M6 .5h7L9.500 5.500H13L2.500 15.500 5.500 9H1.500z" fill="#fbc93a" stroke="#c08a16" /></svg>
            触发
            <Tri w={5} />
          </SmallButton>
          <SmallButton disabled>
            <svg width="15" height="16" viewBox="0 0 15 16">
              <polygon points={starPoints(6.500, 7, 6.500)} fill="#8f9bad" />
              <path d="M8 13l5-5 2 2-5 5z" fill="#c3cad5" stroke="#97a2b2" strokeWidth="0.800" />
            </svg>
            动画刷
          </SmallButton>
        </SmallButtons>
      </GroupBody>
      <GroupLabel>高级动画</GroupLabel>
    </Group>
    <Group $width={253}>
      <GroupBody $left={8}>
        <TimingFields>
          <TimingRow>
            <svg width="13" height="12" viewBox="0 0 13 12"><path d="M4 1.500v9L8.500 6z" fill="#27a532" stroke="#1b7c26" /></svg>
            <span>开始:</span>
            <RibbonField $width={94}>
              <select defaultValue="单击时"><option>单击时</option></select>
              <Tri w={5} />
            </RibbonField>
          </TimingRow>
          <TimingRow>
            <ClockIcon />
            <span>持续时间:</span>
            <RibbonField $width={70}>
              <input defaultValue="02.00" />
              <SpinArrows />
            </RibbonField>
          </TimingRow>
          <TimingRow>
            <ClockIcon red />
            <span>延迟:</span>
            <RibbonField $width={70}>
              <input defaultValue="00.00" />
              <SpinArrows />
            </RibbonField>
          </TimingRow>
        </TimingFields>
        <Rule />
        <SmallButtons $top={1}>
          <ReorderTitle>对动画重新排序</ReorderTitle>
          <SmallButton disabled><svg width="18" height="6"><path d="M5 6l5-6 5 6z" fill="#8f9fb8" /></svg>向前移动</SmallButton>
          <SmallButton disabled><svg width="18" height="6"><path d="M5 0l5 6 5-6z" fill="#8f9fb8" /></svg>向后移动</SmallButton>
        </SmallButtons>
      </GroupBody>
      <GroupLabel>计时</GroupLabel>
    </Group>
  </Ribbon>
);

const AnimationPane = () => (
  <AnimPane>
    <PaneHeader>
      <span>动画窗格</span>
      <Tri w={10} color="#22406e" />
      <IconButton aria-label="关闭窗格"><Close size={9} /></IconButton>
    </PaneHeader>
    <PlayButton>
      <svg width="11" height="10"><path d="M0 0v10l11-5z" fill="#111" /></svg>
      播放
    </PlayButton>
    <AnimList>
      <AnimEntry>
        <Mono>1</Mono>
        <svg width="16" height="16" viewBox="0 0 16 16" fill="none">
          <polygon points={starPoints(8.500, 8.500, 7)} fill="#ffd21f" stroke="#3a3000" strokeWidth="0.800" />
          <path d="M1 13c-1-5 1-7 2-7M10 2c2-1 4 0 5 2M15 1v3h-3M0 8l4-3M12 14l3-2" stroke="#111" />
        </svg>
        <span>组合 6</span>
        <AnimBar />
        <ArrowBox aria-label="效果菜单"><Tri w={8} color="#111" /></ArrowBox>
      </AnimEntry>
      <HScroll>
        <span />
        <button aria-label="向右滚动"><Tri dir="right" w={7} color="#333" /></button>
      </HScroll>
    </AnimList>
    <Reorder>
      <ReorderButton aria-label="上移"><svg width="10" height="10"><path d="M5 0l5 5H7v5H3V5H0z" fill="#8d929a" /></svg></ReorderButton>
      重新排序
      <ReorderButton aria-label="下移"><svg width="10" height="10"><path d="M5 10l5-5H7V0H3v5H0z" fill="#8d929a" /></svg></ReorderButton>
    </Reorder>
  </AnimPane>
);

const Key = ({ k, colon = true }: { k: string; colon?: boolean }) => (
  <Mono>
    (<u>{k}</u>){colon ? ':' : ''}
  </Mono>
);

const Spin = ({ color }: { color: string }) => (
  <SpinKeys>
    <button type="button" aria-label="增加"><Tri dir="up" w={6} color={color} /></button>
    <button type="button" aria-label="减少"><Tri w={6} color={color} /></button>
  </SpinKeys>
);

const EffectDialog = () => (
  <Dialog role="dialog" aria-label="陀螺旋">
    <DialogTitle>
      <h2>陀螺旋</h2>
      <DialogHelp aria-label="帮助">?</DialogHelp>
      <DialogClose aria-label="关闭">
        <svg width="12" height="10" viewBox="0 0 12 10"><path d="M.5.5h3L6 3 8.500.5h3L8 5l3.500 4.500h-3L6 7 3.500 9.500h-3L4 5z" fill="#fff" stroke="#5a2a24" strokeWidth="0.800" /></svg>
      </DialogClose>
    </DialogTitle>
    <DialogClient onSubmit={(e) => e.preventDefault()}>
      <DialogTabs>
        <DialogTab type="button" $active>效果</DialogTab>
        <DialogTab type="button">计时</DialogTab>
      </DialogTabs>
      <DialogPage>
        <Heading>设置</Heading>
        <Field $height={22}>
          <label htmlFor="amount">数量<Key k="O" /></label>
          <Combo>
            <select id="amount" data-current="true"><option>45°&nbsp;&nbsp; 顺时针</option></select>
            <ComboArrow><Tri w={8} color="#111" /></ComboArrow>
          </Combo>
        </Field>
        {[['平滑开始', 'M'], ['平滑结束', 'N'], ['弹跳结束', 'B']].map(([name, k]) => (
          <Field key={k} $height={27}>
            <label htmlFor={`range-${k}`}>{name}<Key k={k} /></label>
            <SmoothRange id={`range-${k}`} type="range" defaultValue={0} />
            <Spinner $width={58}>
              <input aria-label={name} defaultValue="0 秒" />
              <Spin color="#5a68a8" />
            </Spinner>
          </Field>
        ))}
        <CheckRow>
          <input type="checkbox" />
          <span>自动翻转<Key k="U" colon={false} /></span>
        </CheckRow>
        <Heading>增强</Heading>
        <Field $height={23}>
          <label htmlFor="sound">声音<Key k="S" /></label>
          <Combo>
            <select id="sound"><option>[无声音]</option></select>
            <ComboArrow><Tri w={8} color="#111" /></ComboArrow>
          </Combo>
          <SoundButton type="button" aria-label="音量">
            <svg width="13" height="17" viewBox="0 0 13 17" fill="#ddd" stroke="#8a8a8a"><path d="M1 6h3l5-5v15l-5-5H1zM11 5v7" /></svg>
          </SoundButton>
        </Field>
        <Field $height={23}>
          <label htmlFor="after">动画播放后<Key k="A" /></label>
          <Combo>
            <select id="after"><option>不变暗</option></select>
            <ComboArrow><Tri w={8} color="#111" /></ComboArrow>
          </Combo>
        </Field>
        <Field $height={23} $disabled>
          <label htmlFor="animtext">动画文本<Key k="X" /></label>
          <Combo $disabled>
            <select id="animtext" disabled />
            <ComboArrow $disabled><Tri w={8} color="#9a9a9a" /></ComboArrow>
          </Combo>
        </Field>
        <Field $height={31} $disabled>
          <span />
          <Spinner $width={77} $disabled>
            <input id="delay" disabled />
            <Spin color="#999" />
          </Spinner>
          <DelayLabel htmlFor="delay">字母之间延迟百分比<Key k="D" colon={false} /></DelayLabel>
        </Field>
      </DialogPage>
      <DialogActions>
        <DialogButton type="submit" $primary>确定</DialogButton>
        <DialogButton type="button">取消</DialogButton>
      </DialogActions>
    </DialogClient>
  </Dialog>
);

const Status = () => (
  <StatusBar>
    <StatusItem $width={148}>幻灯片 第 1 张，共 1 张</StatusItem>
    <StatusItem $width={105}>“Office 主题”</StatusItem>
    <StatusItem $width={107}>
      <svg width="18" height="16" viewBox="0 0 18 16" fill="none">
        <path d="M2 8l6-2 7 3-3 5-5 1-5-4z" fill="#eef2f8" stroke="#6d7f9c" />
        <path d="M5 7l3 4 8-10" stroke="#4a72b8" strokeWidth="2" />
      </svg>
      中文(中国)
    </StatusItem>
    <ViewButtons>
      <ViewButton $active aria-label="普通视图">
        <svg width="13" height="11" fill="none" stroke="#4a3f22"><path d="M.5.5h12v10H.5zM4.500.5v10M6.500 2.500h4v4h-4zM4.500 8.500h8" /></svg>
      </ViewButton>
      <ViewButton aria-label="幻灯片浏览">
        <svg width="11" height="10" fill="none" stroke="#4c5a70"><path d="M.5.5h4v3h-4zM6.500.5h4v3h-4zM.5 6.500h4v3h-4zM6.500 6.500h4v3h-4z" /></svg>
      </ViewButton>
      <ViewButton aria-label="阅读视图">
        <svg width="12" height="11" fill="none" stroke="#4c5a70"><path d="M.5 1l4 .5L6 2.500l1.500-1 4-.5v8l-4 .5L6 10.500 4.500 9.500l-4-.5zM6 2.500v8M2 4h2.500M2 6h2.500M7.500 4H10M7.500 6H10" /></svg>
      </ViewButton>
      <ViewButton aria-label="幻灯片放映">
        <svg width="12" height="11" fill="none" stroke="#4c5a70"><path d="M0 .5h12M1.500.5v5h9v-5M6 5.500v4M3 10.500h6" /></svg>
      </ViewButton>
    </ViewButtons>
    <ZoomArea>
      <ZoomValue>80%</ZoomValue>
      <IconButton aria-label="缩小">
        <svg width="16" height="16" fill="none" stroke="#5b6b84"><circle cx="8" cy="8" r="7" fill="#f3f6fa" /><path d="M4 8h8" strokeWidth="2" /></svg>
      </IconButton>
      <ZoomRange type="range" aria-label="显示比例" defaultValue={39} />
      <IconButton aria-label="放大">
        <svg width="16" height="16" fill="none" stroke="#5b6b84"><circle cx="8" cy="8" r="7" fill="#f3f6fa" /><path d="M4 8h8M8 4v8" strokeWidth="2" /></svg>
      </IconButton>
      <IconButton aria-label="适应窗口">
        <svg width="16" height="16" fill="none" stroke="#5b6b84">
          <rect x="0.500" y="0.500" width="15" height="15" rx="2" fill="#e8eef6" strokeDasharray="3 1" />
          <path d="M8 2v4M6 4l2-2 2 2M8 14v-4M6 12l2 2 2-2M2 8h4M4 6L2 8l2 2M14 8h-4M12 6l2 2-2 2" />
        </svg>
      </IconButton>
    </ZoomArea>
  </StatusBar>
);

const TaskbarRow = () => (
  <Taskbar>
    <Streak width="60" height="39" viewBox="0 0 60 39" aria-hidden>
      <path d="M4-2C18 9 32 24 43 41" stroke="#b5b1ae" strokeWidth="7" fill="none" opacity="0.9" />
    </Streak>
    <StartButton aria-label="开始">
      <svg width="36" height="36" viewBox="0 0 36 36">
        <circle cx="18" cy="18" r="17" fill="url(#orb)" stroke="#0f3d66" />
        <path d="M10 11c3-2 5-1.500 7.500 0l-1.500 7c-2.500-1.500-5-1.500-7.500 0z" fill="#e8552a" />
        <path d="M19 11.500c2.500 1.500 5 1.500 8-.5l-2 7.500c-2.500 1.500-5 1.500-7.500 0z" fill="#8cc540" />
        <path d="M8 19.500c3-2 5-1.500 7.500 0L14 26.500c-2.500-1.500-5-1.500-7.500 0z" fill="#3f9be4" />
        <path d="M17 20c2.500 1.500 5 1.500 7.500 0l-2 7c-2.500 1.500-4.500 1.500-7 0z" fill="#fcc92c" />
        <path d="M4 13C8 0 28 0 32 13 24 8 12 8 4 13z" fill="#fff" opacity="0.4" />
      </svg>
    </StartButton>
    <TaskButton $tone="blue">
      <svg width="30" height="32" viewBox="0 0 30 32" fill="none">
        <circle cx="15" cy="17" r="13.500" fill="#58bf3a" stroke="#e9f7df" strokeWidth="1.500" />
        <path d="M8.500 18H22c0-9-13-9.500-13.500-.5 0 8 9.500 8 13 3.500" stroke="#fff" strokeWidth="3.500" />
        <path d="M2 24C0 16 14 2 27 3" stroke="#a4e37e" strokeWidth="2.500" />
      </svg>
      ppt如何设置点击...
    </TaskButton>
    <TaskButton $tone="gold">
      <svg width="32" height="34" viewBox="0 0 32 34" fill="none">
        <rect width="32" height="34" rx="3" fill="#f9c417" />
        <path d="M26 5C18 1 8 2 8 8c0 5 15 5 15 10 0 6-9 5-15 3" stroke="#222" strokeWidth="5.500" />
        <path d="M1 32c6-7 14-6 18-3 5 3 9 1 12-2-1 7-8 8-14 6-6-3-10-3-16-1z" fill="#d8261d" />
        <path d="M1 32c4-6 10-6 14-5l-5 4z" fill="#222" />
      </svg>
      头条新闻
    </TaskButton>
    <TaskButton $tone="light">
      <PowerPointLogo size={32} />
      演示文稿1 - Micr...
    </TaskButton>
    <Tray>
      <svg width="17" height="17" viewBox="0 0 17 17" fill="none">
        <path d="M1 3l13-2 2 13-13 2z" fill="#e8442a" />
        <path d="M12 5C9 3 5 4 5.500 6.500c.5 2 6 1.500 6 4C11.500 13 7 13 5 11.500" stroke="#fff" strokeWidth="2" />
      </svg>
      <svg width="22" height="17" viewBox="0 0 22 17" fill="none">
        <path d="M13 1c2 1.500 4 2 6.500 2 0 6-1 10-6.500 13C7.500 13 6.500 9 6.500 3 9 3 11 2.500 13 1z" fill="#4ba82e" stroke="#f2f5e8" strokeWidth="1.500" />
        <path d="M14.500 4l-4 5h2.500l-1 4 4-5.500h-2.500z" fill="#fff" />
      </svg>
      <svg width="16" height="16" viewBox="0 0 16 16" fill="none">
        <circle cx="8" cy="8" r="7.500" fill="#f4d91e" />
        <path d="M1 10a7.500 7.500 0 0014-1c-4 4-9 4-14 1z" fill="#58b334" />
        <path d="M8 4v8M4 8h8" stroke="#1d7a2c" strokeWidth="2.500" />
      </svg>
      <svg width="16" height="16" viewBox="0 0 16 16" fill="none">
        <path d="M3 1c4-1 8 1 10 6l3 4-4 2-8-3z" fill="#1c1c1c" />
        <path d="M1 4l4 4-3 6M5 8l5 2-2 5M12 12l3 3" stroke="#eee" strokeWidth="1.500" />
        <circle cx="5" cy="7" r="2" fill="#eee" />
      </svg>
      <svg width="16" height="16" viewBox="0 0 16 16" fill="none" stroke="#fff">
        <path d="M5.500 3.500h10v8h-10zM8 14.500h6M11 11.500v3M1 1v3.500h3V1M2.500 4.500v8h3" strokeWidth="1.200" />
      </svg>
      <svg width="16" height="16" viewBox="0 0 16 16" fill="none" stroke="#fff">
        <path d="M1 5.500h2.500L8 1.500v13l-4.500-4H1z" fill="#fff" />
        <path d="M10 5.500c1 1.500 1 3.500 0 5M12 4c2 2.500 2 5.500 0 8M14 2.500c2.500 3.500 2.500 7.500 0 11" />
      </svg>
      <Clock>16:22<br />2018\3\29 星期四</Clock>
      <ShowDesktop aria-label="显示桌面" />
    </Tray>
  </Taskbar>
);

export default function App() {
  return (
    <Desktop>
      <Global />
      <Defs />
      <Header />
      <RibbonBar />
      <Body>
        <SlidePanel>
          <PanelTabs>
            <PanelTab $active>幻灯片</PanelTab>
            <PanelTab>大纲</PanelTab>
            <PanelTabsEnd>
              <IconButton aria-label="关闭"><Close size={11} /></IconButton>
            </PanelTabsEnd>
          </PanelTabs>
          <ThumbItem>
            <ThumbMarks>
              1
              <svg width="12" height="10" viewBox="0 0 12 10" fill="none" stroke="#333">
                <polygon points={starPoints(7.500, 5.500, 4.500)} strokeWidth="0.900" />
                <path d="M0 2.500h4M0 5h2.500M0 7.500h3" strokeDasharray="1 1" />
              </svg>
            </ThumbMarks>
            <ThumbSlide><SlideDrawing stroke={5} /></ThumbSlide>
          </ThumbItem>
        </SlidePanel>
        <Center>
          <Editor>
            <RulerColumn>
              <VRuler>
                {rulerMarks(9, true)}
                <PointerMark />
              </VRuler>
            </RulerColumn>
            <Workspace>
              <HRuler>{rulerMarks(12)}</HRuler>
              <Slide><SlideDrawing stroke={2} badge /></Slide>
            </Workspace>
          </Editor>
          <Notes>
            <textarea aria-label="备注" defaultValue="单击此处添加备注" />
            <NotesScroll>
              <Tri dir="up" w={9} color="#6f87ad" />
              <Tri w={9} color="#6f87ad" />
            </NotesScroll>
          </Notes>
        </Center>
        <AnimationPane />
      </Body>
      <Status />
      <TaskbarRow />
      <EffectDialog />
      <Gadget>
        <GadgetBall>46%</GadgetBall>
        <GadgetPill>
          <Rates>
            <div>
              <svg width="7" height="9" fill="#e0573f"><path d="M3.500 0L7 4H4.500v5h-2V4H0z" /></svg>
              0K/s
            </div>
            <div>
              <svg width="7" height="9" fill="#2c9a4a"><path d="M3.500 9L7 5H4.500V0h-2v5H0z" /></svg>
              0.03K/s
            </div>
          </Rates>
          <svg width="19" height="20" viewBox="0 0 19 20" fill="none">
            <circle cx="8.500" cy="11" r="8" fill="#3f83d8" />
            <path d="M8.500 7v8M4.500 11h8" stroke="#fff" strokeWidth="2" />
            <circle cx="14.500" cy="4.500" r="4" fill="#d8322c" />
          </svg>
        </GadgetPill>
      </Gadget>
    </Desktop>
  );
}
